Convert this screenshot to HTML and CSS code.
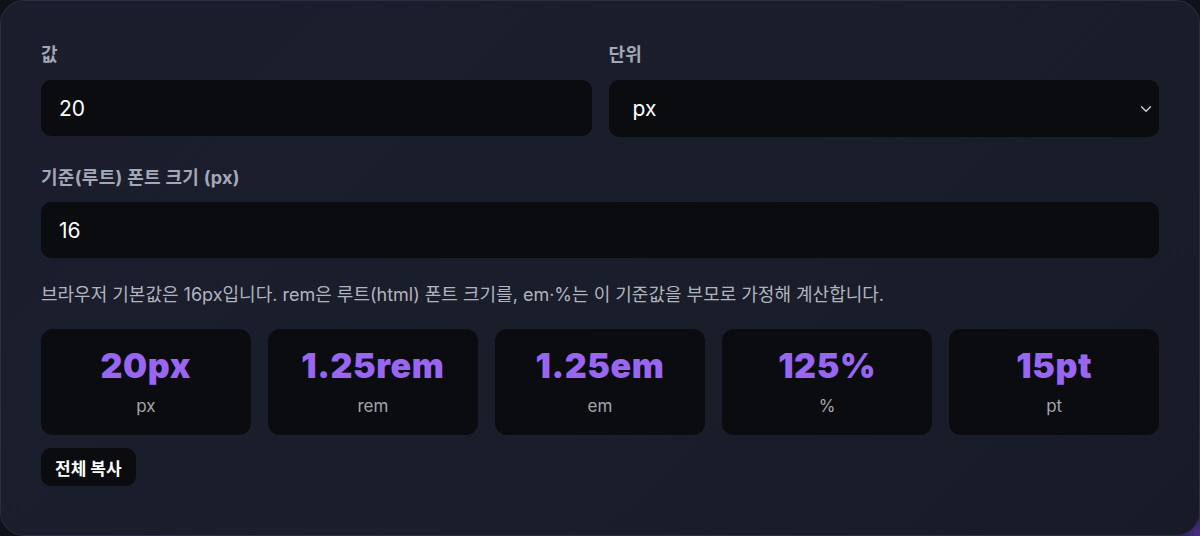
FILE: index.html
```html
<!DOCTYPE html>
<html lang="ko">
<head>
    <meta charset="UTF-8">
    <meta name="viewport" content="width=device-width, initial-scale=1.0">
    <title>단위 변환기</title>
    <link rel="stylesheet" href="styles.css">
</head>
<body>

    <div class="panel">
        <div class="row">
            <div class="field">
                <label class="label" for="value">값</label>
                <input class="input" id="value" type="text" value="20">
            </div>
            <div class="field">
                <label class="label" for="unit">단위</label>
                <div class="select">
                    <span>px</span>
                    <svg class="chevron" width="12" height="8" viewBox="0 0 12 8">
                        <path d="M1.5 1.8 L6 6.2 L10.5 1.8" fill="none" stroke="#d4d6de" stroke-width="1.3" stroke-linecap="round" stroke-linejoin="round"/>
                    </svg>
                </div>
            </div>
        </div>

        <div class="field base">
            <label class="label" for="base">기준(루트) 폰트 크기 (px)</label>
            <input class="input" id="base" type="text" value="16">
        </div>

        <p class="help">브라우저 기본값은 16px입니다. rem은 루트(html) 폰트 크기를, em·%는 이 기준값을 부모로 가정해 계산합니다.</p>

        <div class="results">
            <div class="result">
                <div class="result-value">20px</div>
                <div class="result-unit">px</div>
            </div>
            <div class="result">
                <div class="result-value">1.25rem</div>
                <div class="result-unit">rem</div>
            </div>
            <div class="result">
                <div class="result-value">1.25em</div>
                <div class="result-unit">em</div>
            </div>
            <div class="result">
                <div class="result-value">125%</div>
                <div class="result-unit">%</div>
            </div>
            <div class="result">
                <div class="result-value">15pt</div>
                <div class="result-unit">pt</div>
            </div>
        </div>

        <button class="copy-btn">전체 복사</button>
    </div>

</body>
</html>
```

FILE: styles.css
```css
body {
    margin: 0;
    padding: 0;
    background: radial-gradient(circle at 100% 100%, #4b2f8a 0, #14162a 40px, #10121b 80px);
    font-family: Inter, "Noto Sans CJK KR", sans-serif;
    color: #fff;
}
.panel {
    box-sizing: border-box;
    height: 536px;
    padding: 43px 40px 0 40px;
    border: 1px solid #2a2e3e;
    border-radius: 24px;
    background: linear-gradient(135deg, #1b1d2c 0%, #1a1e2b 50%, #181b27 100%);
}
.row {
    display: grid;
    grid-template-columns: 1fr 1fr;
    gap: 17px;
}
.field {
    display: flex;
    flex-direction: column;
}
.label {
    font-size: 18px;
    font-weight: 700;
    letter-spacing: 0.3px;
    line-height: 22px;
    color: #a4a8b6;
    margin-bottom: 14px;
}
.input, .select {
    box-sizing: border-box;
    height: 56px;
    width: 100%;
    border: none;
    border-radius: 10px;
    background: #0b0c10;
    color: #fff;
    font-family: Inter, "Noto Sans CJK KR", sans-serif;
    font-size: 21px;
    padding: 0 18px;
    outline: none;
}
.select {
    display: flex;
    align-items: center;
    justify-content: space-between;
    height: 57px;
    padding: 0 7px 0 24px;
}
.chevron {
    display: block;
}
.base {
    margin-top: 30px;
}
.base .label {
    margin-bottom: 13px;
}
.help {
    margin: 26px 0 0 0;
    font-size: 18px;
    line-height: 22px;
    color: #b1b4bf;
}
.results {
    display: grid;
    grid-template-columns: repeat(5, 1fr);
    gap: 17.5px;
    margin-top: 23px;
}
.result {
    height: 106px;
    border-radius: 12px;
    background: #0b0c10;
    text-align: center;
    box-sizing: border-box;
    padding-top: 17px;
}
.result-value {
    font-size: 34px;
    font-weight: 900;
    letter-spacing: 0.6px;
    line-height: 40px;
    color: #9966f2;
}
.result-unit {
    font-size: 17px;
    line-height: 22px;
    color: #a3a4ab;
    margin-top: 9px;
}
.copy-btn {
    margin-top: 13px;
    height: 38px;
    padding: 0 14px;
    border: none;
    border-radius: 10px;
    background: #0b0c10;
    color: #fff;
    font-family: Inter, "Noto Sans CJK KR", sans-serif;
    font-size: 17px;
    font-weight: 700;
    cursor: pointer;
}
```
